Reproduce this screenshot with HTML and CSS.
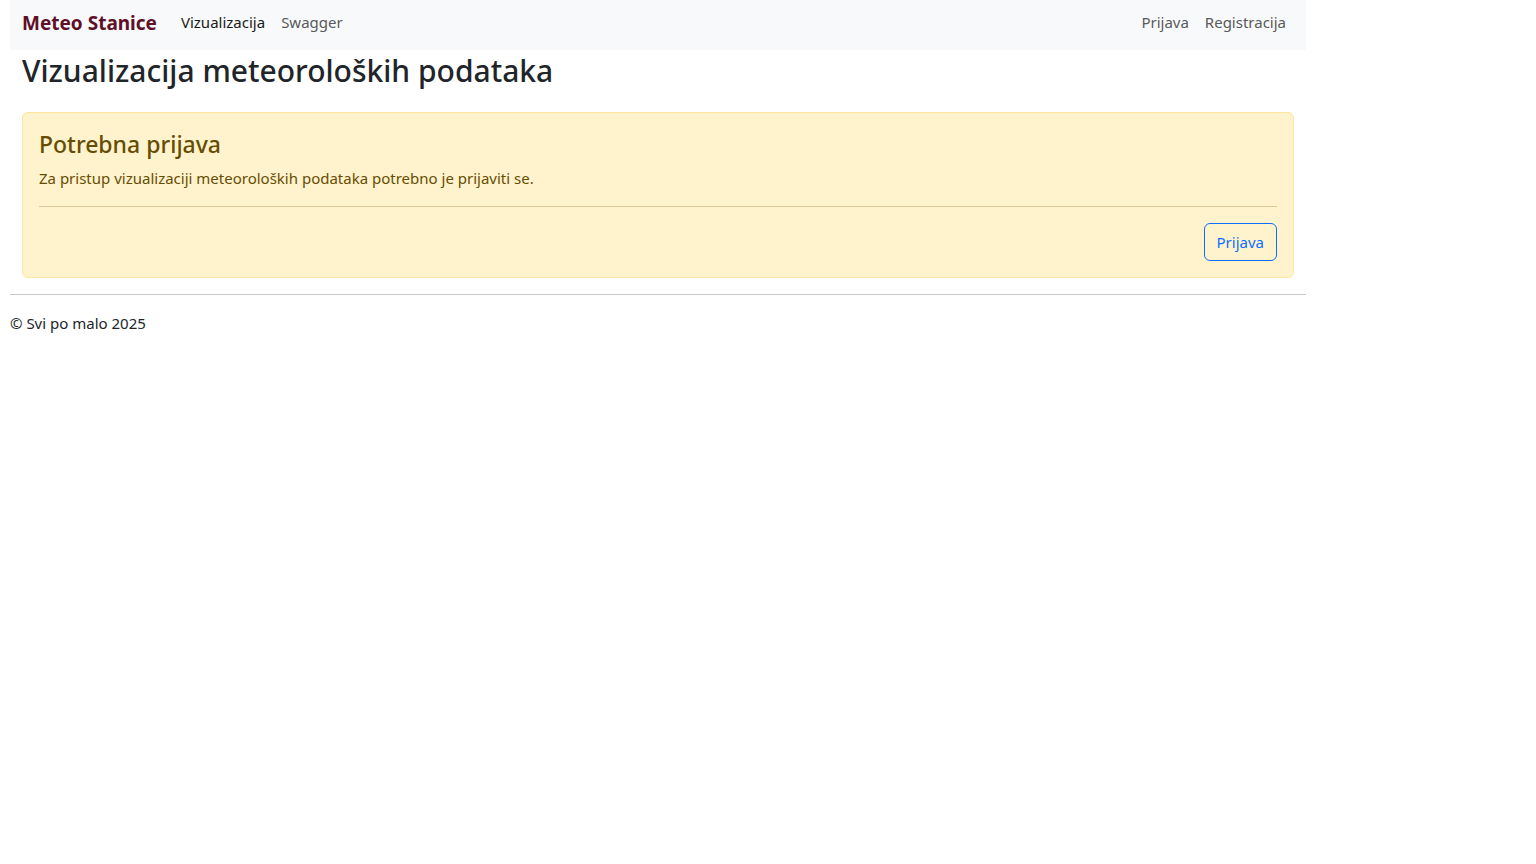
FILE: index.html
```html
<!DOCTYPE html>
<html lang="hr">
<head>
<meta charset="utf-8">
<meta name="viewport" content="width=device-width, initial-scale=1">
<title>Meteo Stanice</title>
<link rel="stylesheet" href="styles.css">
</head>
<body>
<div class="page">
  <nav class="navbar">
    <a class="brand" href="#">Meteo Stanice</a>
    <ul class="nav">
      <li><a class="nav-link active" href="#" aria-current="page">Vizualizacija</a></li>
      <li><a class="nav-link" href="#">Swagger</a></li>
    </ul>
    <ul class="nav nav-end">
      <li><a class="nav-link" href="#">Prijava</a></li>
      <li><a class="nav-link" href="#">Registracija</a></li>
    </ul>
  </nav>
  <main class="content">
    <h1 class="title">Vizualizacija meteoroloških podataka</h1>
    <section class="alert">
      <h2 class="alert-heading">Potrebna prijava</h2>
      <p class="alert-text">Za pristup vizualizaciji meteoroloških podataka potrebno je prijaviti se.</p>
      <hr class="alert-rule">
      <div class="actions"><a class="button" href="#">Prijava</a></div>
    </section>
  </main>
  <footer class="footer">© Svi po malo 2025</footer>
</div>
</body>
</html>
```
FILE: styles.css
```css
*, *::before, *::after { box-sizing: border-box; }

body {
  margin: 0;
  background: #fff;
  color: #212529;
  font: 15px/24px "Segoe UI", "Noto Sans", "Liberation Sans", sans-serif;
}

a { text-decoration: none; }

.page {
  max-width: 1320px;
  padding: 0 14px 0 10px;
}

.navbar {
  display: flex;
  align-items: center;
  padding: 0 12px 4px;
  min-height: 50px;
  background: #f8f9fa;
}

.brand {
  margin-right: 16px;
  color: #5f0f27;
  font-size: 19px;
  font-weight: 700;
}

.nav {
  display: flex;
  margin: 0;
  padding: 0 0 2px;
  list-style: none;
}

.nav-end { margin-left: auto; }

.nav-link {
  display: block;
  padding: 8px;
  color: #595a5b;
}

.nav-link.active { color: #191919; }

.content { padding: 0 12px; }

.title {
  margin: 0 0 20px;
  font-size: 30px;
  font-weight: 500;
  line-height: 42px;
}

.alert {
  margin-bottom: 16px;
  padding: 16px;
  border: 1px solid #ffe69c;
  border-radius: 6px;
  background: #fff3cd;
  color: #664d03;
}

.alert-heading {
  margin: 0 0 6px;
  font-size: 23px;
  font-weight: 500;
  line-height: 31px;
}

.alert-text { margin: 0; }

.alert-rule {
  margin: 16px 0;
  border: 0;
  border-top: 1px solid #d9c99a;
}

.actions {
  display: flex;
  justify-content: flex-end;
}

.button {
  padding: 6px 12px;
  border: 1px solid #0d6efd;
  border-radius: 6px;
  color: #0d6efd;
}

.footer {
  padding-top: 16px;
  border-top: 1px solid #c8c9ca;
}
```
